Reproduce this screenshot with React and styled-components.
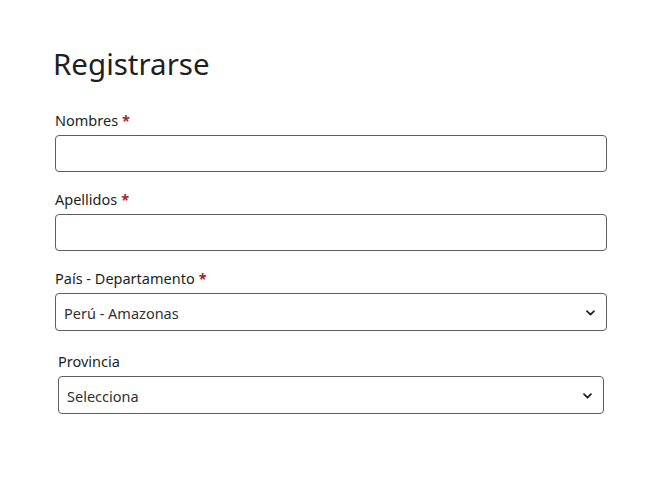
import styled, { createGlobalStyle } from "styled-components";

const GlobalStyle = createGlobalStyle`
  body {
    margin: 0;
    background: #fff;
    font-family: "Noto Sans", "Open Sans", sans-serif;
    color: #201f1e;
  }
`;

const Page = styled.main`
  padding: 44px 0 0 53px;
  width: 556px;
`;

const Title = styled.h1`
  margin: 0 0 26px 0;
  font-size: 29.5px;
  font-weight: 400;
  line-height: 40px;
  color: #201f1e;
`;

const Form = styled.form`
  display: flex;
  flex-direction: column;
  gap: 17px;
`;

const Field = styled.div`
  display: flex;
  flex-direction: column;
  gap: 5px;
  padding: 0 ${({ $inset }) => ($inset ? "5px" : "2px")};
  margin-top: ${({ $inset }) => ($inset ? "3px" : "0")};
`;

const Label = styled.label`
  font-size: 14.5px;
  line-height: 20px;
  color: #201f1e;
`;

const Required = styled.span`
  color: #a4262c;
  font-weight: 700;
  margin-left: 4px;
`;

const Input = styled.input`
  box-sizing: border-box;
  height: 37px;
  width: 100%;
  border: 1px solid #605e5c;
  border-radius: 4px;
  padding: 0 8px;
  font: inherit;
  font-size: 14px;
  background: #fff;
  outline: none;
`;

const SelectBox = styled.div`
  box-sizing: border-box;
  height: 38px;
  width: 100%;
  border: 1px solid #605e5c;
  border-radius: 4px;
  padding: 1px 11px 0 8px;
  display: flex;
  align-items: center;
  justify-content: space-between;
  font-size: 14.5px;
  color: #323130;
  background: #fff;
`;

const Chevron = () => (
  <svg width="9" height="6" viewBox="0 0 9 6" fill="none">
    <path d="M1 1.2l3.5 3.4 3.5-3.4" stroke="#201f1e" strokeWidth="1.7" strokeLinecap="round" strokeLinejoin="round" />
  </svg>
);

const App = () => {
  return (
    <>
      <GlobalStyle />
      <Page>
        <Title>Registrarse</Title>
        <Form>
          <Field>
            <Label>
              Nombres<Required>*</Required>
            </Label>
            <Input type="text" />
          </Field>
          <Field>
            <Label>
              Apellidos<Required>*</Required>
            </Label>
            <Input type="text" />
          </Field>
          <Field>
            <Label>
              País - Departamento<Required>*</Required>
            </Label>
            <SelectBox>
              <span>Perú - Amazonas</span>
              <Chevron />
            </SelectBox>
          </Field>
          <Field $inset>
            <Label>Provincia</Label>
            <SelectBox>
              <span>Selecciona</span>
              <Chevron />
            </SelectBox>
          </Field>
        </Form>
      </Page>
    </>
  );
};

export default App;
